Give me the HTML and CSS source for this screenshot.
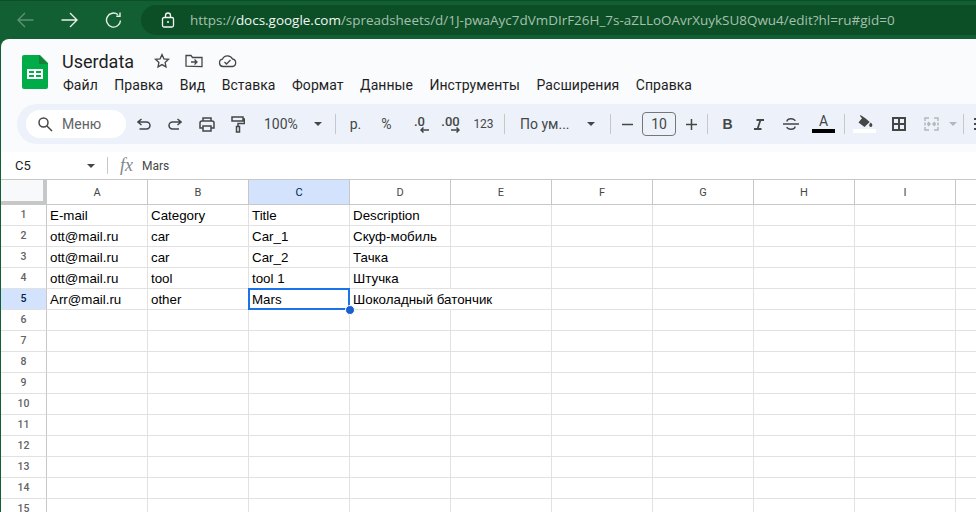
FILE: index.html
```html
<!DOCTYPE html>
<html>

<head>

<title>Userdata</title>
<meta charset="utf-8">

<link rel="stylesheet" href="styles.css">

</head>

<body>

<!-- Browser bar -->
<div class="browser">
	<svg class="nav-icon back" width="17" height="16" viewBox="0 0 17 16"><path d="M16.500 8H1M8 1L1 8l7 7"/></svg>
	<svg class="nav-icon" width="17" height="16" viewBox="0 0 17 16"><path d="M.5 8H16M9 1l7 7-7 7"/></svg>
	<svg class="nav-icon" width="17" height="16" viewBox="0 0 17 16"><path d="M15.500 8.500A7 7 0 1 1 13 2.700M15 .5v3.700h-3.700"/></svg>
	<div class="urlbar">
		<svg class="lock" width="14" height="16" viewBox="0 0 14 16"><rect x="1.500" y="5.500" width="11" height="9.500" rx="1.500"/><path d="M4.500 5.500V3.500a2.500 2.500 0 0 1 5 0v2"/><circle class="dot" cx="7" cy="10" r="1"/></svg>
		<span class="url">https://<b>docs.google.com</b>/spreadsheets/d/1J-pwaAyc7dVmDIrF26H_7s-aZLLoOAvrXuykSU8Qwu4/edit?hl=ru#gid=0</span>
	</div>
</div>

<div class="page">

	<!-- Title and menu -->
	<div class="header">
		<svg class="logo" width="26" height="34" viewBox="0 0 26 34">
			<path fill="#00ac47" d="M2 0h16l8 8v24a2 2 0 0 1-2 2H2a2 2 0 0 1-2-2V2a2 2 0 0 1 2-2z"/>
			<path fill="#188038" d="M17 0l9 9h-9z"/>
			<path fill="#fff" d="M5 14h16v10H5zM7 16v2h5v-2zM14 16v2h5v-2zM7 20v2h5v-2zM14 20v2h5v-2z" fill-rule="evenodd"/>
		</svg>
		<div class="doc">
			<div class="doc-title">
				<span class="doc-name">Userdata</span>
				<svg class="doc-icon star" width="16" height="16" viewBox="0 0 16 16"><path d="M8 1.600l1.900 4.200 4.600.5-3.400 3.100.9 4.500L8 11.600l-4 2.300.9-4.500L1.500 6.300l4.600-.5z"/></svg>
				<svg class="doc-icon" width="18" height="14" viewBox="0 0 18 14"><path d="M1 12.200V1.500h5l1.500 2H17v9.200z"/><path d="M6 8h6M9.500 5.500L12 8l-2.500 2.500"/></svg>
				<svg class="doc-icon" width="19" height="14" viewBox="0 0 19 14"><path d="M5 12.500a3.700 3.700 0 0 1-.6-7.300A5.500 5.500 0 0 1 14.500 5a3.800 3.800 0 0 1 0 7.500z"/><path d="M6.500 8l2 2 4-4"/></svg>
			</div>
			<div class="menu">
				<span>Файл</span><span>Правка</span><span>Вид</span><span>Вставка</span><span>Формат</span><span>Данные</span><span>Инструменты</span><span>Расширения</span><span>Справка</span>
			</div>
		</div>
	</div>

	<!-- Toolbar -->
	<div class="toolbar">
		<div class="search">
			<svg class="tool-icon" width="16" height="16" viewBox="0 0 16 16"><circle cx="6.500" cy="6.500" r="4.500"/><path d="M10 10l5 5"/></svg>
			<span>Меню</span>
		</div>
		<div class="tool undo"><svg class="tool-icon" width="14" height="12" viewBox="0 0 14 12"><path d="M4.500 1L1 4 4.500 7M1 4h8.500a3.500 3.500 0 0 1 0 7H2.500"/></svg></div>
		<div class="tool"><svg class="tool-icon" width="14" height="12" viewBox="0 0 14 12"><path d="M9.500 1L13 4 9.500 7M13 4H4.500a3.500 3.500 0 0 0 0 7H11"/></svg></div>
		<div class="tool print"><svg class="tool-icon" width="16" height="15" viewBox="0 0 16 15"><path d="M4 4V1h8v3M4 11H1V6a2 2 0 0 1 2-2h10a2 2 0 0 1 2 2v5h-3M4 9h8v5H4z"/></svg></div>
		<div class="tool"><svg class="tool-icon" width="14" height="17" viewBox="0 0 14 17"><path d="M1 1h11v4H1zM12 3h1.500v4.500H7v3M5.500 10.500h3v5.500h-3z"/></svg></div>
		<div class="zoom-level">100%</div>
		<div class="caret"></div>
		<div class="sep"></div>
		<div class="tool txt">р.</div>
		<div class="tool txt">%</div>
		<div class="tool dec dec-less">
			<span>.0</span>
			<svg class="tool-icon" width="9" height="6" viewBox="0 0 9 6"><path d="M9 3H1M3.500 .5L1 3l2.500 2.500"/></svg>
		</div>
		<div class="tool dec">
			<span>.00</span>
			<svg class="tool-icon" width="9" height="6" viewBox="0 0 9 6"><path d="M0 3h8M5.500 .5L8 3 5.500 5.500"/></svg>
		</div>
		<div class="tool txt num">123</div>
		<div class="sep sep-num"></div>
		<div class="font-name">По ум...</div>
		<div class="caret font-caret"></div>
		<div class="sep sep-font"></div>
		<div class="tool size-btn"><svg class="tool-icon" width="11" height="11" viewBox="0 0 11 11"><path d="M0 5.500h11"/></svg></div>
		<div class="size">10</div>
		<div class="tool size-btn plus"><svg class="tool-icon" width="11" height="11" viewBox="0 0 11 11"><path d="M0 5.500h11M5.500 0v11"/></svg></div>
		<div class="sep sep-size"></div>
		<div class="tool txt bold">B</div>
		<div class="tool"><svg class="ital" width="10" height="11" viewBox="0 0 10 11"><path d="M2.500 1H10M0 10h7.500M6.500 1L3.500 10"/></svg></div>
		<div class="tool strike"><svg class="tool-icon" width="16" height="14" viewBox="0 0 16 14"><path d="M0 7h16M4 4.500C4 1 12 1 12 4M12 9.500c0 3.500-8 3.500-8 .5"/></svg></div>
		<div class="tool color text-color">
			<span>A</span>
			<div class="swatch black"></div>
		</div>
		<div class="sep sep-color"></div>
		<div class="tool color">
			<svg width="16" height="13" viewBox="0 0 16 13"><path fill="#444746" d="M3.500 0l5.200 3.500 4 3.500L7.500 12 1.500 7.500 5 3.300 3 1z"/><path fill="#444746" d="M13.800 7.500c1 1.300 1.600 2 1.600 2.800a1.600 1.600 0 0 1-3.200 0c0-.8.600-1.500 1.600-2.800z"/></svg>
			<div class="swatch white"></div>
		</div>
		<div class="tool borders"><svg class="borders-icon" width="14" height="14" viewBox="0 0 14 14"><path d="M1 1h12v12H1zM7 1v12M1 7h12"/></svg></div>
		<div class="tool merge"><svg class="tool-icon" width="15" height="14" viewBox="0 0 15 14"><path d="M5 1H1v3M1 10v3h4M10 1h4v3M14 10v3h-4M1 5.500v3M14 5.500v3M3 7h2.500M4 5l2 2-2 2M12 7H9.500M11 5L9 7l2 2"/></svg></div>
		<div class="caret merge-caret"></div>
		<div class="sep sep-merge"></div>
		<div class="more"></div>
	</div>

	<!-- Formula bar -->
	<div class="formula">
		<span class="cell-name">C5</span>
		<div class="caret"></div>
		<div class="formula-sep"></div>
		<span class="fx">fx</span>
		<span class="formula-value">Mars</span>
	</div>

	<!-- Grid -->
	<table class="grid">
		<colgroup>
			<col class="col-head"><col><col><col><col><col><col><col><col><col><col>
		</colgroup>
		<tr class="cols">
			<th class="corner"></th><th>A</th><th>B</th><th class="active">C</th><th>D</th><th>E</th><th>F</th><th>G</th><th>H</th><th>I</th><th></th>
		</tr>
		<tr><th>1</th><td>E-mail</td><td>Category</td><td>Title</td><td>Description</td><td></td><td></td><td></td><td></td><td></td><td></td></tr>
		<tr><th>2</th><td>ott@mail.ru</td><td>car</td><td>Car_1</td><td>Скуф-мобиль</td><td></td><td></td><td></td><td></td><td></td><td></td></tr>
		<tr><th>3</th><td>ott@mail.ru</td><td>car</td><td>Car_2</td><td>Тачка</td><td></td><td></td><td></td><td></td><td></td><td></td></tr>
		<tr><th>4</th><td>ott@mail.ru</td><td>tool</td><td>tool 1</td><td>Штучка</td><td></td><td></td><td></td><td></td><td></td><td></td></tr>
		<tr><th class="active">5</th><td>Arr@mail.ru</td><td>other</td><td class="selected">Mars</td><td class="spill">Шоколадный батончик</td><td></td><td></td><td></td><td></td><td></td><td></td></tr>
		<tr><th>6</th><td></td><td></td><td></td><td></td><td></td><td></td><td></td><td></td><td></td><td></td></tr>
		<tr><th>7</th><td></td><td></td><td></td><td></td><td></td><td></td><td></td><td></td><td></td><td></td></tr>
		<tr><th>8</th><td></td><td></td><td></td><td></td><td></td><td></td><td></td><td></td><td></td><td></td></tr>
		<tr><th>9</th><td></td><td></td><td></td><td></td><td></td><td></td><td></td><td></td><td></td><td></td></tr>
		<tr><th>10</th><td></td><td></td><td></td><td></td><td></td><td></td><td></td><td></td><td></td><td></td></tr>
		<tr><th>11</th><td></td><td></td><td></td><td></td><td></td><td></td><td></td><td></td><td></td><td></td></tr>
		<tr><th>12</th><td></td><td></td><td></td><td></td><td></td><td></td><td></td><td></td><td></td><td></td></tr>
		<tr><th>13</th><td></td><td></td><td></td><td></td><td></td><td></td><td></td><td></td><td></td><td></td></tr>
		<tr><th>14</th><td></td><td></td><td></td><td></td><td></td><td></td><td></td><td></td><td></td><td></td></tr>
		<tr><th>15</th><td></td><td></td><td></td><td></td><td></td><td></td><td></td><td></td><td></td><td></td></tr>
	</table>

</div>

</body>

</html>
```

FILE: styles.css
```css
html, body {
	margin: 0;
	height: 512px;
	overflow: hidden;
}

body {
	background-color: #115f33;
	font-family: "Roboto", "Liberation Sans", sans-serif;
	color: #444746;
}

/* browser bar */

.browser {
	display: flex;
	align-items: center;
	height: 30px;
	padding: 4px 0 4px 17px;
	border-top: 1px solid #0c4f27;
}

.nav-icon {
	flex: none;
	fill: none;
	stroke: #e8f0ea;
	stroke-width: 1.400;
	margin-right: 27px;
}

.nav-icon.back {
	stroke: #5e9274;
}

.urlbar {
	display: flex;
	align-items: center;
	flex: 1;
	height: 30px;
	margin-left: -8px;
	padding-left: 20px;
	background-color: #0c4f27;
	border-radius: 15px 0 0 15px;
}

.lock {
	flex: none;
	fill: none;
	stroke: #f2f6f3;
	stroke-width: 1.300;
}

.lock .dot {
	fill: #f2f6f3;
	stroke: none;
}

.url {
	margin-left: 15px;
	font-family: "Open Sans", sans-serif;
	font-size: 13.460px;
	color: #a6c0ae;
	white-space: nowrap;
}

.url b {
	font-weight: 400;
	color: #f2f6f3;
}

/* page */

.page {
	margin-left: 1px;
	height: 473px;
	background-color: #f9fbfd;
	border-top-left-radius: 8px;
	overflow: hidden;
}

.header {
	display: flex;
	height: 65px;
	padding-left: 21px;
	box-sizing: border-box;
}

.logo {
	margin-top: 16px;
}

.doc {
	margin-left: 14px;
}

.doc-title {
	display: flex;
	align-items: center;
	height: 30px;
	margin-top: 7px;
}

.doc-name {
	font-size: 18px;
	color: #1f1f1f;
	margin-right: 20px;
}

.doc-icon {
	fill: none;
	stroke: #444746;
	stroke-width: 1.300;
	margin-right: 15px;
}

.menu {
	display: flex;
	gap: 16.500px;
	margin-top: 1px;
	margin-left: 1px;
	font-size: 14px;
	letter-spacing: .05px;
	color: #1f1f1f;
}

/* toolbar */

.toolbar {
	display: flex;
	align-items: center;
	height: 40px;
	margin-left: 16px;
	padding-left: 9px;
	background-color: #edf2fa;
	border-radius: 20px 0 0 20px;
	white-space: nowrap;
}

.search {
	display: flex;
	align-items: center;
	flex: none;
	width: 100px;
	height: 28px;
	box-sizing: border-box;
	padding-left: 11px;
	background-color: #fff;
	border-radius: 14px;
	font-size: 14px;
	color: #5f6368;
}

.search span {
	margin-left: 9px;
}

.tool-icon {
	fill: none;
	stroke: #444746;
	stroke-width: 1.500;
}

.borders-icon {
	fill: none;
	stroke: #444746;
	stroke-width: 2;
}

.ital {
	fill: none;
	stroke: #444746;
	stroke-width: 1.800;
}

.tool {
	display: flex;
	flex-direction: column;
	align-items: center;
	justify-content: center;
	flex: none;
	width: 31px;
	height: 28px;
	color: #444746;
}

.tool.undo {
	margin-left: 2px;
}

.tool.print {
	margin-left: 1px;
}

.tool.txt {
	font-size: 14px;
}

.tool.num {
	margin-left: 2px;
	font-size: 12px;
}

.zoom-level {
	flex: none;
	width: 37px;
	margin-left: 11px;
	font-size: 14px;
}

.caret {
	flex: none;
	width: 0;
	height: 0;
	margin-left: 13px;
	border-left: 4px solid transparent;
	border-right: 4px solid transparent;
	border-top: 4px solid #444746;
}

.sep {
	flex: none;
	width: 1px;
	height: 20px;
	margin: 0 4px 0 13px;
	background-color: #c7c7c7;
}

.sep.sep-num {
	margin-left: 5px;
}

.sep.sep-font {
	margin-left: 15px;
}

.sep.sep-size {
	margin-left: 4px;
}

.sep.sep-color {
	margin-left: 5px;
}

.sep.sep-merge {
	margin: 0 0 0 6px;
}

.dec {
	font-size: 13px;
	font-weight: 500;
	line-height: 11px;
}

.dec-less {
	margin-left: 2px;
}

.dec .tool-icon {
	margin-left: 10px;
}

.font-name {
	flex: none;
	width: 50px;
	margin-left: 11px;
	font-size: 14px;
}

.font-caret {
	margin-left: 17px;
}

.tool.size-btn {
	width: 24px;
}

.tool.plus {
	margin-left: 3px;
}

.size {
	flex: none;
	width: 32px;
	height: 22px;
	margin-left: 3px;
	border: 1px solid #747775;
	border-radius: 4px;
	text-align: center;
	font-size: 14px;
	line-height: 22px;
}

.bold {
	font-family: "Liberation Sans", sans-serif;
	font-weight: 700;
}

.strike {
	margin-left: 1px;
}

.text-color {
	margin-left: 2px;
}

.borders {
	margin-left: 3px;
}

.merge {
	margin-left: 2px;
}

.color {
	font-size: 14px;
	line-height: 13px;
}

.swatch {
	width: 23px;
	height: 4px;
	margin-top: 1px;
}

.swatch.black {
	background-color: #000;
}

.swatch.white {
	background-color: #fff;
}

.merge .tool-icon {
	stroke: #b4b7bb;
}

.merge-caret {
	margin-left: 2px;
	border-top-color: #b4b7bb;
}

.more {
	flex: none;
	width: 8px;
	height: 13px;
	margin-left: 10px;
	background: repeating-linear-gradient(#444746 0, #444746 2px, transparent 2px, transparent 5px);
}

/* formula bar */

.formula {
	display: flex;
	align-items: center;
	height: 28px;
	margin-top: 8px;
	padding-left: 14px;
	background-color: #fff;
	border-bottom: 1px solid #c7c7c7;
	box-sizing: border-box;
	font-size: 12px;
	color: #1f1f1f;
}

.cell-name {
	width: 72px;
	font-size: 13px;
}

.formula .caret {
	margin-left: 0;
}

.formula-sep {
	width: 1px;
	height: 17px;
	margin-left: 12px;
	background-color: #c7c7c7;
}

.fx {
	width: 22px;
	margin-left: 12px;
	font-family: "Liberation Serif", serif;
	font-style: italic;
	font-size: 18px;
	color: #80868b;
}

.formula-value {
	color: #444746;
}

/* grid */

.grid {
	table-layout: fixed;
	width: 1055px;
	border-collapse: separate;
	border-spacing: 0;
	background-color: #fff;
	font-family: "Liberation Sans", sans-serif;
	font-size: 13.330px;
	color: #000;
}

.grid col {
	width: 101px;
}

.grid col.col-head {
	width: 46px;
}

.grid tr {
	height: 21px;
}

.grid tr.cols {
	height: 25px;
}

.grid th {
	padding: 0;
	font-family: "Roboto", sans-serif;
	font-size: 11px;
	font-weight: 400;
	color: #444746;
	background-color: #fff;
	border-right: 1px solid #c7c7c7;
	border-bottom: 1px solid #c7c7c7;
	box-sizing: border-box;
}

.grid tr:not(.cols) th {
	padding-bottom: 2px;
	border-bottom-color: #e1e1e1;
	font-size: 10.500px;
	font-weight: 500;
	color: #5f6368;
}

.grid th.corner {
	background-color: #f8f9fa;
	border-right: 4px solid #c7c7c7;
	border-bottom: 4px solid #c7c7c7;
}

.grid th.active, .grid tr:not(.cols) th.active {
	background-color: #d3e3fd;
	color: #041e49;
}

.grid td {
	padding: 0 3px;
	border-right: 1px solid #e1e1e1;
	border-bottom: 1px solid #e1e1e1;
	box-sizing: border-box;
	white-space: nowrap;
	overflow: visible;
}

.grid td.spill {
	border-right-color: transparent;
}

.grid td.selected {
	position: relative;
}

/* selection box over the active cell */
.grid td.selected::before {
	content: "";
	position: absolute;
	left: -1px;
	top: -1px;
	right: -1px;
	bottom: -1px;
	border: 2px solid #1a73e8;
}

.grid td.selected::after {
	content: "";
	position: absolute;
	right: -6px;
	bottom: -6px;
	width: 8px;
	height: 8px;
	background-color: #1a5fd0;
	border-radius: 50%;
	border: 1px solid #fff;
}
```
